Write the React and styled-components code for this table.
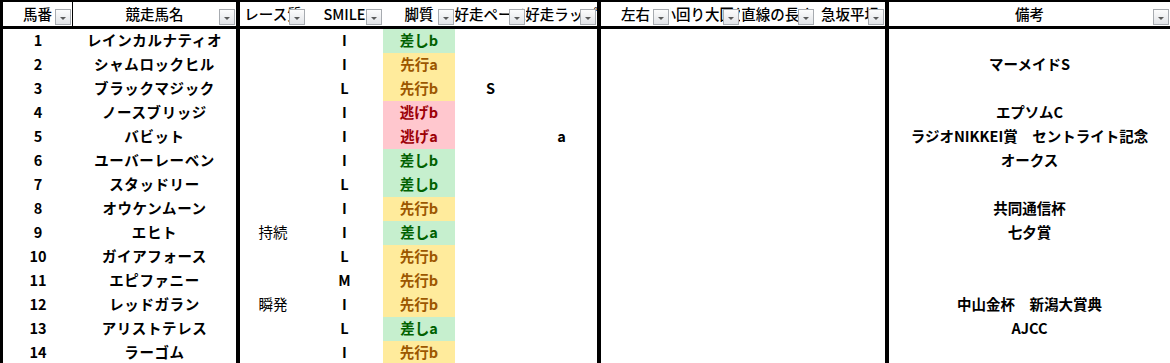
import styled, { createGlobalStyle } from "styled-components";

// Excel-like filtered sheet of horses

const GlobalStyle = createGlobalStyle`
    html, body {
        margin: 0;
        padding: 0;
        background: #ffffff;
    }
    body {
        font-family: "Noto Sans CJK JP", "Noto Sans", sans-serif;
        color: #000000;
    }
    #root {
        width: 1170px;
        height: 363px;
        overflow: hidden;
    }
`;

const COLUMNS = "70px 163px 70px 77px 72px 71px 71px 73px 70px 75px 70px 285px";

const Sheet = styled.div`
    width: 1170px;
    border-left: 3px solid #000;
    box-sizing: border-box;
`;

const HeaderRow = styled.div`
    display: grid;
    grid-template-columns: ${COLUMNS};
    height: 29px;
    box-sizing: border-box;
    border-top: 2px solid #000;
    border-bottom: 3px solid #000;
`;

const Row = styled.div`
    display: grid;
    grid-template-columns: ${COLUMNS};
    height: 24px;
`;

const HeadCell = styled.div`
    position: relative;
    display: flex;
    align-items: center;
    justify-content: center;
    overflow: hidden;
    white-space: nowrap;
    font-size: 14.5px;
    font-weight: 500;
    padding-bottom: 2px;
    box-sizing: border-box;
    border-left: ${(p) => (p.$thick ? "4px solid #000" : "none")};
    border-right: ${(p) => (p.$divider ? "1px solid #000" : "none")};
`;

const FilterButton = styled.span`
    position: absolute;
    right: 1px;
    bottom: 1px;
    width: 16px;
    height: 16px;
    box-sizing: border-box;
    border: 1px solid #a7abb0;
    background: linear-gradient(#fcfcfc, #e2e4e8);

    &::after {
        content: "";
        position: absolute;
        left: 4px;
        top: 7px;
        border-left: 3px solid transparent;
        border-right: 3px solid transparent;
        border-top: 3px solid #5a5a5a;
    }
`;

const tones = {
    green: { bg: "#c6efce", fg: "#006100" },
    yellow: { bg: "#ffeb9c", fg: "#9c5700" },
    red: { bg: "#ffc7ce", fg: "#9c0006" },
};

const Cell = styled.div`
    display: flex;
    align-items: center;
    justify-content: center;
    white-space: nowrap;
    overflow: hidden;
    font-size: 14.5px;
    font-weight: ${(p) => (p.$light ? 400 : 700)};
    letter-spacing: ${(p) => (p.$wide ? "0.6px" : "0")};
    padding-bottom: 3px;
    box-sizing: border-box;
    border-left: ${(p) => (p.$thick ? "4px solid #000" : "none")};
    background: ${(p) => (p.$tone ? tones[p.$tone].bg : "transparent")};
    color: ${(p) => (p.$tone ? tones[p.$tone].fg : "#000")};
`;

const headers = [
    { label: "馬番", divider: true },
    { label: "競走馬名" },
    { label: "レース質", thick: true },
    { label: "SMILE" },
    { label: "脚質" },
    { label: "好走ペース" },
    { label: "好走ラップ" },
    { label: "左右", thick: true },
    { label: "小回り大回り" },
    { label: "直線の長さ" },
    { label: "急坂平坦" },
    { label: "備考", thick: true },
];

const styleTone = (s) => {
    if (s.startsWith("差し")) return "green";
    if (s.startsWith("先行")) return "yellow";
    return "red";
};

const horses = [
    { no: 1, name: "レインカルナティオ", race: "", smile: "I", style: "差しb", pace: "", lap: "", note: "" },
    { no: 2, name: "シャムロックヒル", race: "", smile: "I", style: "先行a", pace: "", lap: "", note: "マーメイドS" },
    { no: 3, name: "ブラックマジック", race: "", smile: "L", style: "先行b", pace: "S", lap: "", note: "" },
    { no: 4, name: "ノースブリッジ", race: "", smile: "I", style: "逃げb", pace: "", lap: "", note: "エプソムC" },
    { no: 5, name: "バビット", race: "", smile: "I", style: "逃げa", pace: "", lap: "a", note: "ラジオNIKKEI賞　セントライト記念" },
    { no: 6, name: "ユーバーレーベン", race: "", smile: "I", style: "差しb", pace: "", lap: "", note: "オークス" },
    { no: 7, name: "スタッドリー", race: "", smile: "L", style: "差しb", pace: "", lap: "", note: "" },
    { no: 8, name: "オウケンムーン", race: "", smile: "I", style: "先行b", pace: "", lap: "", note: "共同通信杯" },
    { no: 9, name: "エヒト", race: "持続", smile: "I", style: "差しa", pace: "", lap: "", note: "七夕賞" },
    { no: 10, name: "ガイアフォース", race: "", smile: "L", style: "先行b", pace: "", lap: "", note: "" },
    { no: 11, name: "エピファニー", race: "", smile: "M", style: "先行b", pace: "", lap: "", note: "" },
    { no: 12, name: "レッドガラン", race: "瞬発", smile: "I", style: "先行b", pace: "", lap: "", note: "中山金杯　新潟大賞典" },
    { no: 13, name: "アリストテレス", race: "", smile: "L", style: "差しa", pace: "", lap: "", note: "AJCC" },
    { no: 14, name: "ラーゴム", race: "", smile: "I", style: "先行b", pace: "", lap: "", note: "" },
];

const App = () => {
    return (
        <>
            <GlobalStyle />
            <Sheet>
                <HeaderRow>
                    {headers.map((h) => (
                        <HeadCell key={h.label} $thick={h.thick} $divider={h.divider}>
                            {h.label}
                            <FilterButton />
                        </HeadCell>
                    ))}
                </HeaderRow>
                {horses.map((h) => (
                    <Row key={h.no}>
                        <Cell>{h.no}</Cell>
                        <Cell $wide>{h.name}</Cell>
                        <Cell $thick $light>{h.race}</Cell>
                        <Cell>{h.smile}</Cell>
                        <Cell $tone={styleTone(h.style)}>{h.style}</Cell>
                        <Cell>{h.pace}</Cell>
                        <Cell>{h.lap}</Cell>
                        <Cell $thick></Cell>
                        <Cell></Cell>
                        <Cell></Cell>
                        <Cell></Cell>
                        <Cell $thick>{h.note}</Cell>
                    </Row>
                ))}
            </Sheet>
        </>
    );
};

export default App;
